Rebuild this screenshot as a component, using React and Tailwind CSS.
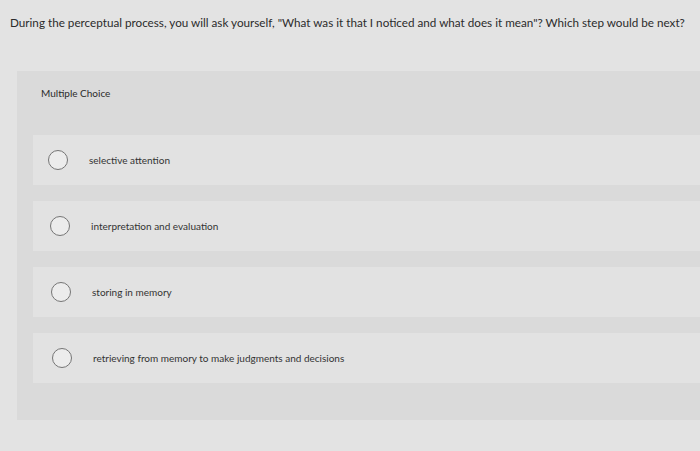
import React from 'react';

const options = [
  { text: 'selective attention', shift: 'ml-[0px]' },
  { text: 'interpretation and evaluation', shift: 'ml-[2px]' },
  { text: 'storing in memory', shift: 'ml-[3px]' },
  { text: 'retrieving from memory to make judgments and decisions', shift: 'ml-[4px]' },
];

const App = () => {
  return (
    <div
      className="w-[700px] h-[451px] bg-[#e3e3e3] text-[#2b2b2b] overflow-hidden"
      style={{ fontFamily: 'Lato, "Open Sans", sans-serif' }}
    >
      <p className="pt-[14px] pl-[10px] text-[11.7px] leading-[16px]">
        During the perceptual process, you will ask yourself, "What was it that I noticed and what does it mean"? Which step would be next?
      </p>

      <div className="mt-[41px] ml-[17px] h-[349px] bg-[#dadada] pt-[16px]">
        <div className="pl-[24px] text-[10px] leading-[12px]">Multiple Choice</div>

        <div className="mt-[36px] flex flex-col gap-[16px] pl-[16px]">
          {options.map((o, i) => (
            <div key={i} className="h-[50px] bg-[#e2e2e2] flex items-center">
              <div className={`flex items-center ${o.shift}`}>
                <span className="ml-[15px] w-[20px] h-[20px] rounded-full border border-[#757575] bg-[#ececec]" />
                <span className="ml-[21px] text-[10px] leading-[12px] text-[#333]">{o.text}</span>
              </div>
            </div>
          ))}
        </div>
      </div>
    </div>
  );
};

export default App;
